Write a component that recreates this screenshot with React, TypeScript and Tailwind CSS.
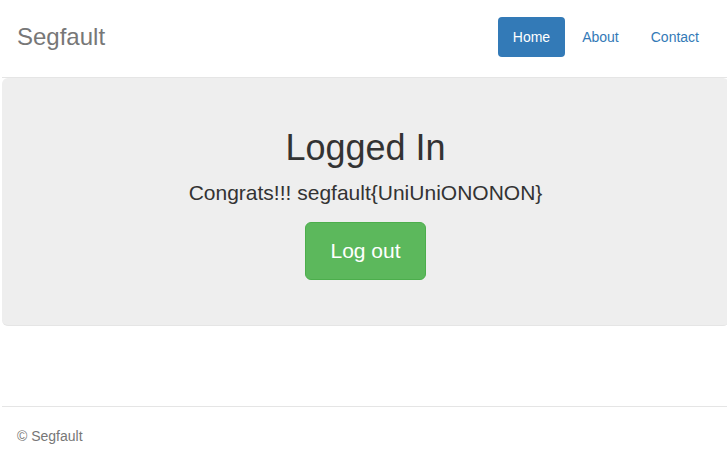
const navItems = [
    { label: 'Home', active: true },
    { label: 'About', active: false },
    { label: 'Contact', active: false },
];

const App = () => {
    return (
        <div className="min-h-screen bg-white overflow-hidden font-['Liberation_Sans',Arial,sans-serif] text-[14px] leading-[20px] text-[#333]">
            <div className="ml-[2px] w-[727px] pt-[17px]">
                <header className="flex items-center justify-between px-[15px] pb-5 border-b border-[#e5e5e5]">
                    <h3 className="text-[24px] leading-[40px] text-[#777]">Segfault</h3>
                    <nav className="flex gap-[2px]">
                        {navItems.map((item) => (
                            <a
                                key={item.label}
                                href="#"
                                className={
                                    item.active
                                        ? 'block h-10 px-[15px] leading-10 rounded bg-[#337ab7] text-white'
                                        : 'block h-10 px-[15px] leading-10 rounded text-[#337ab7]'
                                }
                            >
                                {item.label}
                            </a>
                        ))}
                    </nav>
                </header>

                <section className="mb-[80px] rounded-md border-b border-[#e5e5e5] bg-[#eee] pt-[30px] pb-[29px] text-center">
                    <h1 className="mt-5 mb-[10px] text-[36px] leading-[1.1] text-[#333]">Logged In</h1>
                    <p className="mb-[14px] text-[21px] leading-[30px]">Congrats!!! segfault{'{UniUniONONON}'}</p>
                    <div className="mb-4">
                        <a
                            href="#"
                            className="inline-block rounded-md border border-[#4cae4c] bg-[#5cb85c] px-6 py-[14px] text-[21px] leading-[28px] text-white"
                        >
                            Log out
                        </a>
                    </div>
                </section>

                <footer className="border-t border-[#e5e5e5] px-[15px] pt-[19px] text-[#777]">
                    <p>© Segfault</p>
                </footer>
            </div>
        </div>
    );
};

export default App;
